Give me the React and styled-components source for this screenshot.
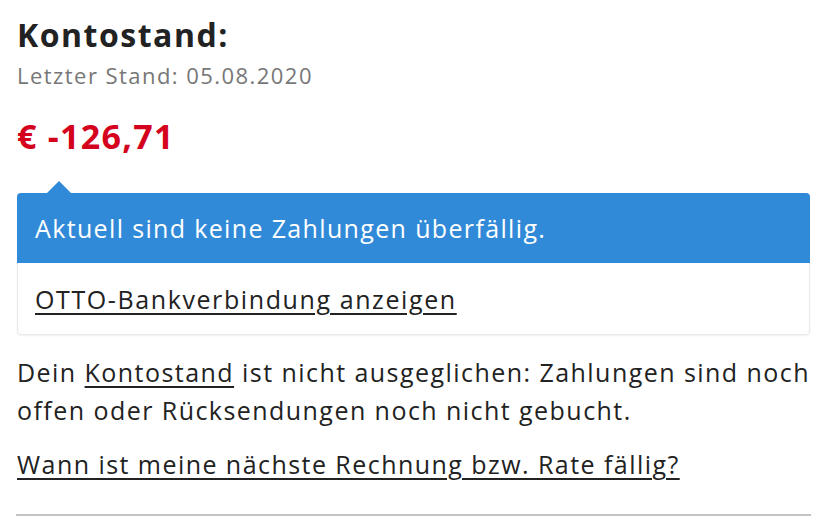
import styled, { createGlobalStyle } from "styled-components";

const GlobalStyle = createGlobalStyle`
  html, body {
    margin: 0;
    padding: 0;
    background: #fff;
  }
  body {
    font-family: "Open Sans", "Noto Sans", sans-serif;
    color: #222;
  }
`;

const Page = styled.div`
  width: 828px;
  height: 520px;
  overflow: hidden;
  padding: 13px 17px 0 17px;
  box-sizing: border-box;
`;

const Title = styled.h1`
  margin: 0;
  font-weight: 700;
  font-size: 32px;
  line-height: 44px;
  letter-spacing: 1.5px;
  color: #222;
`;

const Updated = styled.div`
  font-size: 22px;
  line-height: 30px;
  letter-spacing: 1.45px;
  color: #777;
  margin-top: 3px;
`;

const Amount = styled.div`
  margin-top: 24px;
  font-weight: 700;
  font-size: 34px;
  line-height: 44px;
  letter-spacing: 1.3px;
  color: #d4021d;
`;

const Notice = styled.div`
  position: relative;
  margin-top: 35px;
  width: 793px;
  border: 1px solid #e8e8e8;
  border-radius: 4px;
  box-shadow: 0 1px 2px rgba(0, 0, 0, 0.06);
  box-sizing: border-box;

  &::before {
    content: "";
    position: absolute;
    left: 28px;
    top: -13px;
    border-left: 13px solid transparent;
    border-right: 13px solid transparent;
    border-bottom: 13px solid #318ad8;
  }
`;

const NoticeHead = styled.div`
  background: #318ad8;
  color: #fff;
  height: 70px;
  margin: -1px -1px 0 -1px;
  border-radius: 4px 4px 0 0;
  padding: 0 18px;
  display: flex;
  align-items: center;
  font-size: 25px;
  letter-spacing: 1.35px;
`;

const NoticeBody = styled.div`
  height: 71px;
  padding: 0 17px;
  display: flex;
  align-items: center;
  font-size: 25px;
  letter-spacing: 1.6px;
`;

const Link = styled.a`
  color: #222;
  text-decoration: underline;
  text-underline-offset: 4px;
  text-decoration-thickness: 2px;
`;

const Text = styled.p`
  margin: ${(p) => p.$gap}px 0 0 0;
  font-size: 25px;
  line-height: 38px;
  letter-spacing: 1.45px;
  color: #222;
`;

const Divider = styled.hr`
  margin: 31px 0 0 -1px;
  border: none;
  height: 2px;
  width: 795px;
  background: #c4c4c4;
`;

export default function App() {
  return (
    <Page>
      <GlobalStyle />
      <Title>Kontostand:</Title>
      <Updated>Letzter Stand: 05.08.2020</Updated>
      <Amount>€ -126,71</Amount>
      <Notice>
        <NoticeHead>Aktuell sind keine Zahlungen überfällig.</NoticeHead>
        <NoticeBody>
          <Link>OTTO-Bankverbindung anzeigen</Link>
        </NoticeBody>
      </Notice>
      <Text $gap={18}>
        Dein <Link>Kontostand</Link> ist nicht ausgeglichen: Zahlungen sind noch
        offen oder Rücksendungen noch nicht gebucht.
      </Text>
      <Text $gap={16}>
        <Link>Wann ist meine nächste Rechnung bzw. Rate fällig?</Link>
      </Text>
      <Divider />
    </Page>
  );
}
